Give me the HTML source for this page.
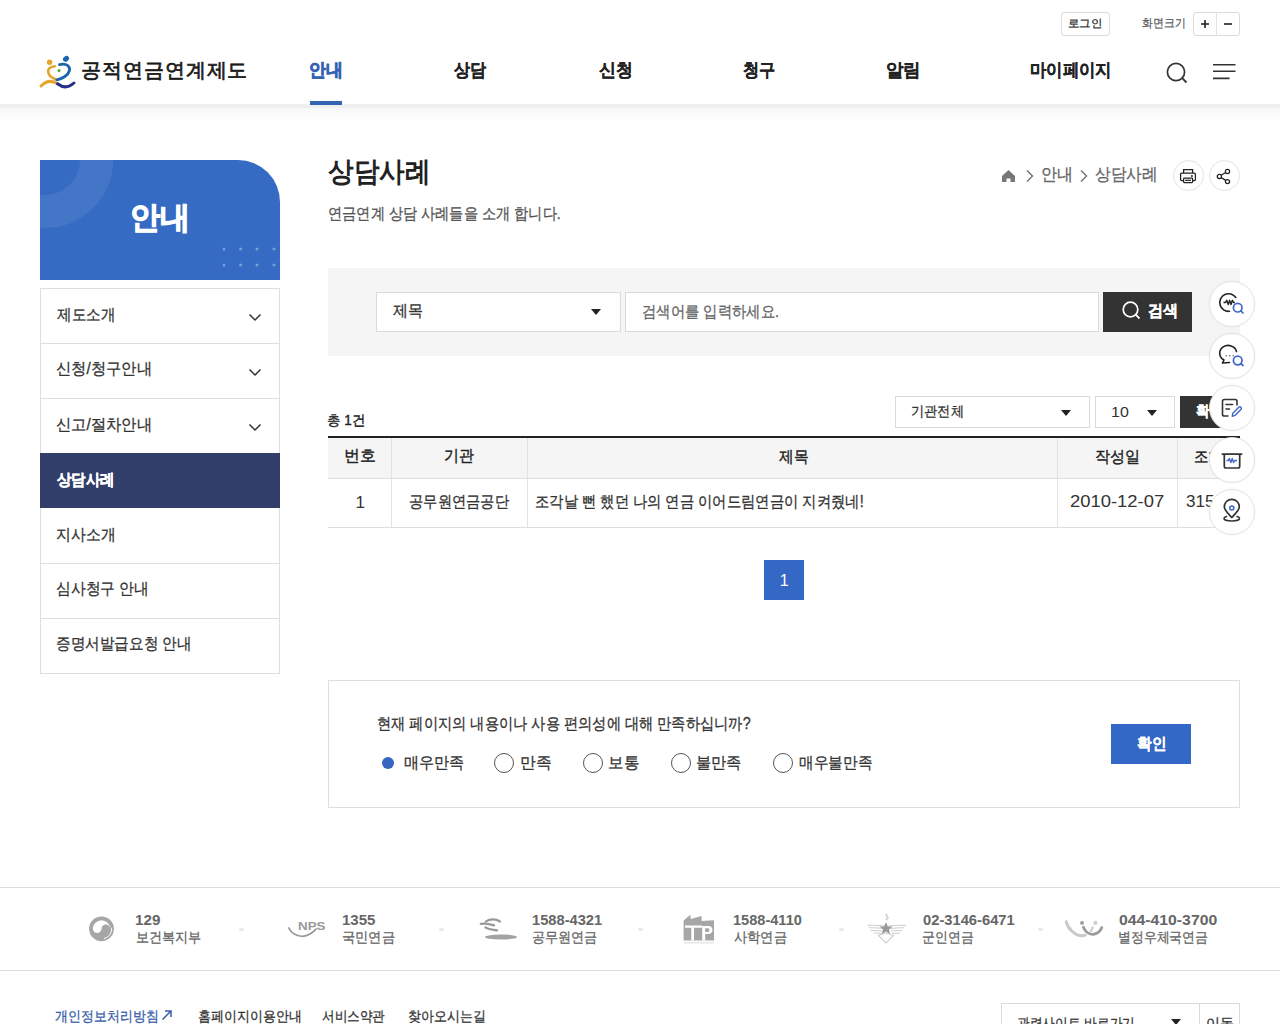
<!DOCTYPE html>
<html lang="ko">
<head>
<meta charset="utf-8">
<title>상담사례 - 공적연금연계제도</title>
<style>
*{box-sizing:border-box;margin:0;padding:0}
html,body{width:1280px;height:1024px;overflow:hidden;background:#fff}
body{position:relative;font-family:"Liberation Sans",sans-serif;color:#222}
.a{position:absolute}
.t{position:absolute;white-space:nowrap}
.bx{position:absolute;border:1px solid #ddd;background:#fff}
svg{position:absolute;overflow:visible}
</style>
</head>
<body>

<!-- ========== HEADER ========== -->
<div class="bx" style="left:1061px;top:12px;width:49px;height:24px;border-radius:3px;border-color:#dcdcdc"></div>
<div class="bx" style="left:1193px;top:12px;width:47px;height:24px;border-radius:3px;border-color:#dcdcdc"></div>
<div class="a" style="left:1216px;top:13px;width:1px;height:22px;background:#e5e5e5"></div>
<svg style="left:1200px;top:19px" width="10" height="10"><path d="M5 1V9M1 5H9" stroke="#222" stroke-width="1.6"/></svg>
<svg style="left:1223px;top:19px" width="10" height="10"><path d="M1 5H9" stroke="#222" stroke-width="1.6"/></svg>

<!-- logo -->
<svg style="left:36px;top:50px" width="50" height="45" viewBox="0 0 50 45">
  <circle cx="13.6" cy="12.3" r="2.7" fill="#e4a52a"/>
  <ellipse cx="30" cy="8.8" rx="3.2" ry="2.6" transform="rotate(-35 30 8.8)" fill="#1a64b0"/>
  <path d="M19 16.2 C14 16.5 11.5 19 12.3 22.5 C13 26 16 28 19.3 29" fill="none" stroke="#e4a52a" stroke-width="2.6" stroke-linecap="round"/>
  <path d="M23.5 14.6 C31 12.5 34.5 17 33.3 21 C32 25.5 26 29 20.8 29.8" fill="none" stroke="#1a64b0" stroke-width="2.8" stroke-linecap="round"/>
  <circle cx="23" cy="20.6" r="1.6" fill="#5fae3a"/>
  <path d="M5 36 C10 31 16 30 21.5 33.8" fill="none" stroke="#e4a52a" stroke-width="3" stroke-linecap="round"/>
  <path d="M21.5 33.8 C27 38 33 37.5 38 33" fill="none" stroke="#23308a" stroke-width="3" stroke-linecap="round"/>
</svg>

<!-- nav -->
<div class="a" style="left:310px;top:101px;width:32px;height:4px;background:#3563b4"></div>
<svg style="left:1165px;top:61px" width="26" height="26"><circle cx="11" cy="11" r="8.6" fill="none" stroke="#333" stroke-width="1.7"/><path d="M17.2 17.2L21.5 21.5" stroke="#333" stroke-width="1.8"/></svg>
<svg style="left:1212px;top:62px" width="26" height="20"><path d="M1 2.7H23.5M1 9.3H23.5M1 16.4H17.5" stroke="#333" stroke-width="1.6"/></svg>
<div class="a" style="left:0;top:104px;width:1280px;height:4px;background:#efefef"></div><div class="a" style="left:0;top:108px;width:1280px;height:14px;background:linear-gradient(#f7f7f7 0,#fafafa 30%,#fdfdfd 70%,#fff 100%)"></div>
<div class="a" style="left:310px;top:101px;width:32px;height:4px;background:#3563b4"></div>

<!-- ========== SIDEBAR ========== -->
<div class="a" style="left:40px;top:160px;width:240px;height:120px;background:#356bc3;border-top-right-radius:42px;overflow:hidden">
  <div class="a" style="left:-63px;top:-68px;width:136px;height:136px;border-radius:50%;border:33px solid rgba(255,255,255,0.08)"></div>
  <svg style="left:180px;top:85px" width="60" height="30">
    <g fill="rgba(255,255,255,0.35)"><circle cx="4" cy="4" r="1.5"/><circle cx="20.6" cy="4" r="1.5"/><circle cx="37" cy="4" r="1.5"/><circle cx="54" cy="4" r="1.5"/><circle cx="4" cy="20" r="1.5"/><circle cx="20.6" cy="20" r="1.5"/><circle cx="37" cy="20" r="1.5"/><circle cx="54" cy="20" r="1.5"/></g>
  </svg>
</div>

<div class="a" style="left:40px;top:288px;width:240px;height:386px;border:1px solid #dedede;background:#fff"></div>
<div class="a" style="left:40px;top:343px;width:240px;height:1px;background:#dedede"></div>
<div class="a" style="left:40px;top:398px;width:240px;height:1px;background:#dedede"></div>
<div class="a" style="left:40px;top:453px;width:240px;height:55px;background:#333f6b"></div>
<div class="a" style="left:40px;top:563px;width:240px;height:1px;background:#dedede"></div>
<div class="a" style="left:40px;top:618px;width:240px;height:1px;background:#dedede"></div>

<svg style="left:248px;top:313px" width="14" height="9"><path d="M1.5 1.5L7 7L12.5 1.5" fill="none" stroke="#333" stroke-width="1.5"/></svg>
<svg style="left:248px;top:368px" width="14" height="9"><path d="M1.5 1.5L7 7L12.5 1.5" fill="none" stroke="#333" stroke-width="1.5"/></svg>
<svg style="left:248px;top:423px" width="14" height="9"><path d="M1.5 1.5L7 7L12.5 1.5" fill="none" stroke="#333" stroke-width="1.5"/></svg>

<!-- ========== MAIN ========== -->

<!-- breadcrumb -->
<svg style="left:1001px;top:169px" width="16" height="14"><path d="M1 7L7.5 1L14 7V13H9.5V9.5H5.5V13H1Z" fill="#777"/></svg>
<svg style="left:1025px;top:169px" width="10" height="14"><path d="M2 1.5L7.5 7L2 12.5" fill="none" stroke="#777" stroke-width="1.5"/></svg>
<svg style="left:1079px;top:169px" width="10" height="14"><path d="M2 1.5L7.5 7L2 12.5" fill="none" stroke="#777" stroke-width="1.5"/></svg>
<div class="bx" style="left:1172.5px;top:160px;width:31px;height:31px;border-radius:50%;border-color:#e2e2e2"></div>
<div class="bx" style="left:1208.5px;top:160px;width:31px;height:31px;border-radius:50%;border-color:#e2e2e2"></div>
<svg style="left:1172px;top:160px" width="32" height="32" viewBox="0 0 32 32"><g fill="none" stroke="#222" stroke-width="1.25"><path d="M11.6 13V9.6H20.6V13"/><rect x="8.6" y="13.1" width="14.8" height="7.4" rx="1"/><rect x="11.6" y="18.2" width="9" height="4.3" rx="0.8" fill="#fff"/><path d="M13.2 20.3H19"/></g><circle cx="19.9" cy="16" r="0.95" fill="#222"/></svg>
<svg style="left:1208px;top:160px" width="32" height="32" viewBox="0 0 32 32"><g fill="none" stroke="#222" stroke-width="1.25"><circle cx="19.5" cy="11.4" r="2.1"/><circle cx="11.4" cy="16.4" r="2.1"/><circle cx="19.5" cy="21.6" r="2.1"/><path d="M13.2 15.2L17.7 12.5M13.2 17.6L17.7 20.4"/></g></svg>

<!-- search -->
<div class="a" style="left:328px;top:268px;width:912px;height:88px;background:#f5f5f5"></div>
<div class="bx" style="left:376px;top:292px;width:245px;height:40px;border-color:#dadada"></div>
<svg style="left:590px;top:308px" width="12" height="8"><path d="M1 1H11L6 7Z" fill="#222"/></svg>
<div class="bx" style="left:625px;top:292px;width:474px;height:40px;border-color:#dadada"></div>
<div class="a" style="left:1103px;top:292px;width:89px;height:40px;background:#333"></div>
<svg style="left:1121px;top:300px" width="22" height="22"><circle cx="9.5" cy="9.5" r="7.3" fill="none" stroke="#fff" stroke-width="1.7"/><path d="M14.7 14.7L18.5 18.5" stroke="#fff" stroke-width="1.8"/></svg>

<!-- list controls -->
<div class="bx" style="left:895px;top:396px;width:195px;height:32px;border-color:#dadada"></div>
<svg style="left:1060px;top:409px" width="12" height="8"><path d="M1 1H11L6 7Z" fill="#222"/></svg>
<div class="bx" style="left:1095px;top:396px;width:80px;height:32px;border-color:#dadada"></div>
<svg style="left:1146px;top:409px" width="12" height="8"><path d="M1 1H11L6 7Z" fill="#222"/></svg>
<div class="a" style="left:1180px;top:396px;width:60px;height:32px;background:#333"></div>

<!-- table -->
<div class="a" style="left:328px;top:436px;width:912px;height:2px;background:#222"></div>
<div class="a" style="left:328px;top:438px;width:912px;height:40px;background:#f5f5f5"></div>
<div class="a" style="left:328px;top:478px;width:912px;height:1px;background:#dedede"></div>
<div class="a" style="left:328px;top:527px;width:912px;height:1px;background:#dedede"></div>
<div class="a" style="left:391px;top:438px;width:1px;height:89px;background:#e2e2e2"></div>
<div class="a" style="left:527px;top:438px;width:1px;height:89px;background:#e2e2e2"></div>
<div class="a" style="left:1057px;top:438px;width:1px;height:89px;background:#e2e2e2"></div>
<div class="a" style="left:1177px;top:438px;width:1px;height:89px;background:#e2e2e2"></div>



<!-- pagination -->
<div class="a" style="left:764px;top:560px;width:40px;height:40px;background:#3468c4"></div>

<!-- survey -->
<div class="bx" style="left:328px;top:680px;width:912px;height:128px;border-color:#dedede"></div>
<div class="a" style="left:382px;top:757px;width:12px;height:12px;border-radius:50%;background:#3567c0"></div>
<div class="a" style="left:494px;top:753px;width:20px;height:20px;border-radius:50%;border:1px solid #555"></div>
<div class="a" style="left:583px;top:753px;width:20px;height:20px;border-radius:50%;border:1px solid #555"></div>
<div class="a" style="left:671px;top:753px;width:20px;height:20px;border-radius:50%;border:1px solid #555"></div>
<div class="a" style="left:773px;top:753px;width:20px;height:20px;border-radius:50%;border:1px solid #555"></div>
<div class="a" style="left:1111px;top:724px;width:80px;height:40px;background:#3468c6"></div>

<!-- floating quick menu -->
<div class="bx" style="left:1209px;top:281px;width:46px;height:46px;border-radius:50%;border-color:#e3e3e3;box-shadow:0 0 3px rgba(0,0,0,0.04);z-index:5"></div>
<div class="bx" style="left:1209px;top:333px;width:46px;height:46px;border-radius:50%;border-color:#e3e3e3;box-shadow:0 0 3px rgba(0,0,0,0.04);z-index:5"></div>
<div class="bx" style="left:1209px;top:385px;width:46px;height:46px;border-radius:50%;border-color:#e3e3e3;box-shadow:0 0 3px rgba(0,0,0,0.04);z-index:5"></div>
<div class="bx" style="left:1209px;top:437px;width:46px;height:46px;border-radius:50%;border-color:#e3e3e3;box-shadow:0 0 3px rgba(0,0,0,0.04);z-index:5"></div>
<div class="bx" style="left:1209px;top:489px;width:46px;height:46px;border-radius:50%;border-color:#e3e3e3;box-shadow:0 0 3px rgba(0,0,0,0.04);z-index:5"></div>

<svg style="left:1218px;top:290px;z-index:6" width="28" height="28" viewBox="0 0 28 28">
  <path d="M17.8 7.5 A8.8 8.8 0 1 0 11.5 21.3" fill="none" stroke="#222" stroke-width="1.6" stroke-linecap="round"/>
  <path d="M5.5 12.5H7.5L8.7 10.3L10.2 14.5L11.6 10.3L13 14.5L14.4 10.3L15.5 12.5H17" fill="none" stroke="#222" stroke-width="1.4" stroke-linejoin="round"/>
  <circle cx="19.7" cy="17.7" r="4.3" fill="none" stroke="#3f66c6" stroke-width="1.7"/>
  <path d="M22.8 20.8L25 23" stroke="#3f66c6" stroke-width="1.7" stroke-linecap="round"/>
</svg>
<svg style="left:1218px;top:342px;z-index:6" width="28" height="28" viewBox="0 0 28 28">
  <path d="M18.5 9.5 A8.5 7.8 0 1 0 6 18 L4.5 21 L11.5 20.5" fill="none" stroke="#222" stroke-width="1.6" stroke-linecap="round" stroke-linejoin="round"/>
  <path d="M7.5 13.8H9M11 13.8H12.5M14.5 13.8H16" stroke="#555" stroke-width="1"/>
  <circle cx="19.7" cy="18.5" r="4.3" fill="none" stroke="#3f66c6" stroke-width="1.7"/>
  <path d="M22.8 21.6L25 23.5" stroke="#3f66c6" stroke-width="1.7" stroke-linecap="round"/>
</svg>
<svg style="left:1218px;top:394px;z-index:6" width="28" height="28" viewBox="0 0 28 28">
  <path d="M10.5 22H6.3C5.2 22 4.5 21.3 4.5 20.2V7.3C4.5 6.2 5.2 5.5 6.3 5.5H17.2C18.3 5.5 19 6.2 19 7.3V11.5" fill="none" stroke="#333" stroke-width="1.6" stroke-linejoin="round"/>
  <path d="M8 10.5H14.5M8 15H11.5" stroke="#333" stroke-width="1.6" stroke-linecap="round"/>
  <path d="M14.2 22.3L14.8 19.3L20.8 13.3C21.4 12.7 22.3 12.7 22.9 13.3C23.5 13.9 23.5 14.8 22.9 15.4L16.9 21.4Z" fill="none" stroke="#3f66c6" stroke-width="1.4" stroke-linejoin="round"/>
</svg>
<svg style="left:1218px;top:446px;z-index:6" width="28" height="28" viewBox="0 0 28 28">
  <path d="M4.5 8.2H23.5" stroke="#333" stroke-width="1.8" stroke-linecap="round"/>
  <path d="M6.3 8.2V20.3C6.3 21.3 7 22 8 22H20C21 22 21.7 21.3 21.7 20.3V8.2" fill="none" stroke="#333" stroke-width="1.7" stroke-linejoin="round"/>
  <path d="M8.5 14.5H10.3L11.3 12.5L12.8 16.5L14.2 12.5L15.6 16.5L16.8 14.5H19" fill="none" stroke="#3f66c6" stroke-width="1.4" stroke-linejoin="round"/>
</svg>
<svg style="left:1218px;top:498px;z-index:6" width="28" height="28" viewBox="0 0 28 28">
  <path d="M13.8 19.5C9.5 15 6.3 12 6.3 8.8A7.5 7.5 0 0 1 21.3 8.8C21.3 12 18 15 13.8 19.5Z" fill="none" stroke="#333" stroke-width="1.7" stroke-linejoin="round"/>
  <circle cx="13.8" cy="10" r="2" fill="none" stroke="#3f66c6" stroke-width="1.6"/>
  <path d="M8.5 18.5C6.5 19 6 19.8 6 20.5C6 21.8 9.5 23 13.8 23C18.1 23 21.5 21.8 21.5 20.5C21.5 19.8 21 19 19 18.5" fill="none" stroke="#333" stroke-width="1.6" stroke-linecap="round"/>
</svg>

<!-- ========== FOOTER ========== -->
<div class="a" style="left:0;top:887px;width:1280px;height:1px;background:#dedede"></div>
<div class="a" style="left:0;top:970px;width:1280px;height:1px;background:#dedede"></div>

<!-- gov logo -->
<svg style="left:80px;top:905px" width="50" height="50" viewBox="0 0 50 50">
  <circle cx="21.5" cy="23.8" r="12.4" fill="#a6a6a6"/>
  <path d="M12.9 23.8 A8.6 8.6 0 0 1 30.1 23.8 A4.3 4.3 0 0 0 21.5 23.8 A4.3 4.3 0 0 1 12.9 23.8Z" fill="#fff"/>
  <path d="M31.6 22.5 A10.2 10.2 0 0 1 24 33.7" fill="none" stroke="#fff" stroke-width="0.9"/>
</svg>
<div class="a" style="left:239px;top:928px;width:5px;height:3px;border-radius:2px;background:#e9e9e9"></div>

<!-- NPS logo -->
<svg style="left:280px;top:905px" width="60" height="45" viewBox="0 0 60 45">
  <text x="18" y="24.6" font-family="Liberation Sans" font-size="11.5" font-weight="700" fill="#9a9a9a" textLength="27.5" lengthAdjust="spacingAndGlyphs">NPS</text>
  <path d="M8.8 23 C12 30 22 34 30 29 C33 27 35 25.5 36 24" fill="none" stroke="#999" stroke-width="1.8" stroke-linecap="round"/>
</svg>
<div class="a" style="left:439px;top:928px;width:5px;height:3px;border-radius:2px;background:#e9e9e9"></div>

<!-- GEPS logo -->
<svg style="left:470px;top:905px" width="60" height="45" viewBox="0 0 60 45">
  <path d="M15.7 16.6 C20 13.5 26 13.8 30 16.5" fill="none" stroke="#999" stroke-width="2.2" stroke-linecap="round"/>
  <path d="M10.8 18.8 C15 18.2 20 19 23.9 20.4" fill="none" stroke="#999" stroke-width="2.3" stroke-linecap="round"/>
  <path d="M15.5 22.5 C18.5 24 22 24.8 27 25.3" fill="none" stroke="#999" stroke-width="2.3" stroke-linecap="round"/>
  <ellipse cx="31" cy="32" rx="16" ry="2.6" fill="#a3a3a3"/>
</svg>
<div class="a" style="left:638px;top:928px;width:5px;height:3px;border-radius:2px;background:#e9e9e9"></div>

<!-- TP logo -->
<svg style="left:675px;top:905px" width="50" height="45" viewBox="0 0 50 45">
  <path d="M8.6 15.4 L15.4 9.7 L15.8 14 L26.6 11 L26.6 16 L39 15.2 L39 35.4 L8.6 35.4Z" fill="#a6a6a6"/>
  <path d="M10 20.6H27V22.8H19V35.4H16.3V22.8H10Z" fill="#fff"/>
  <path d="M27.2 21H33C36.5 21 37.5 23 37.5 25C37.5 27.2 36 29 33 29H30.2V35.4H27.2Z M30.2 23.2V26.9H32.6C34 26.9 34.5 26 34.5 25C34.5 24 34 23.2 32.6 23.2Z" fill="#fff" fill-rule="evenodd"/>
  <rect x="9" y="37" width="30" height="1.5" fill="#e6e6e6"/>
</svg>
<div class="a" style="left:839px;top:928px;width:5px;height:3px;border-radius:2px;background:#e9e9e9"></div>

<!-- military logo -->
<svg style="left:860px;top:905px" width="55" height="45" viewBox="0 0 55 45">
  <g stroke="#cfcfcf" stroke-width="1.1" fill="none">
    <path d="M7.5 20.4 C15 20 21 20.4 26 21 M28 21 C33 20.4 40 20 46 20.4"/>
    <path d="M9 22.8 C15 22.6 20 23 24 23.5 M30 23.5 C34 23 39 22.6 44 22.8"/>
    <path d="M10.5 25.5 C15 25.3 19 25.6 22.5 26 M31 26 C35 25.6 39 25.3 42 25.5"/>
    <path d="M14 28 C17 28 19.5 28.2 21.5 28.6 M32 28.6 C34 28.2 37 28 40 28"/>
    <path d="M26 28 L18.5 30.5 L26 38 L33.5 30.7 Z"/>
  </g>
  <path d="M26 9 L27.8 13 L26 15" fill="none" stroke="#d5d5d5" stroke-width="2"/>
  <path d="M26 17 L27.9 21.4 L32.6 21.6 L29 24.6 L30.2 29.2 L26 26.6 L21.8 29.2 L23 24.6 L19.4 21.6 L24.1 21.4Z" fill="#999"/>
</svg>
<div class="a" style="left:1038px;top:928px;width:5px;height:3px;border-radius:2px;background:#e9e9e9"></div>

<!-- post logo -->
<svg style="left:1055px;top:905px" width="60" height="45" viewBox="0 0 60 45">
  <path d="M11.3 16.8 C13 24 20 30.5 27 30.8 C28.5 30.8 29.5 30.6 30.3 30.2" fill="none" stroke="#c9c9c9" stroke-width="3" stroke-linecap="round"/>
  <path d="M28.4 22.3 C30 26.5 34 29.5 38 29.3 C42 29 45.5 26 46.8 22.6" fill="none" stroke="#9a9a9a" stroke-width="2.8" stroke-linecap="round"/>
  <circle cx="27" cy="17.9" r="1.9" fill="#999"/>
  <circle cx="40.4" cy="17.9" r="2.1" fill="#cfcfcf"/>
  <path d="M37.6 22.5 L36 26" stroke="#d0d0d0" stroke-width="2.4" stroke-linecap="round"/>
</svg>

<!-- bottom links -->
<svg style="left:161px;top:1009px" width="12" height="12"><path d="M1.5 10.5L10 2M4 2H10V8" fill="none" stroke="#3a5ea8" stroke-width="1.5"/></svg>

<div class="bx" style="left:1001px;top:1003px;width:199px;height:40px;border-color:#dadada"></div>
<svg style="left:1170px;top:1018px" width="12" height="8"><path d="M1 1H11L6 7Z" fill="#222"/></svg>
<div class="bx" style="left:1199px;top:1003px;width:41px;height:40px;border-color:#dadada"></div>

<div class="t" style="left:1068.06px;top:18.10px;font-size:11px;line-height:11px;font-weight:400;color:#222;transform:scaleX(1.0387);transform-origin:0 0;-webkit-text-stroke:0.25px currentColor;">로그인</div>
<div class="t" style="left:1142.30px;top:18.40px;font-size:11.5px;line-height:11.5px;font-weight:400;color:#555;transform:scaleX(0.9043);transform-origin:0 0;-webkit-text-stroke:0.2px currentColor;">화면크기</div>
<div class="t" style="left:80.60px;top:60.40px;font-size:20px;line-height:20px;font-weight:400;color:#1a1a1a;letter-spacing:0.986px;-webkit-text-stroke:0.7px currentColor;">공적연금연계제도</div>
<div class="t" style="left:309.06px;top:61.30px;font-size:18px;line-height:18px;font-weight:700;color:#3563b4;transform:scaleX(0.9412);transform-origin:0 0;-webkit-text-stroke:0.7px currentColor;">안내</div>
<div class="t" style="left:454.00px;top:60.80px;font-size:18px;line-height:18px;font-weight:700;color:#222;transform:scaleX(0.8919);transform-origin:0 0;-webkit-text-stroke:0.2px currentColor;">상담</div>
<div class="t" style="left:598.50px;top:61.30px;font-size:18px;line-height:18px;font-weight:700;color:#222;transform:scaleX(0.9412);transform-origin:0 0;-webkit-text-stroke:0.2px currentColor;">신청</div>
<div class="t" style="left:742.50px;top:61.30px;font-size:18px;line-height:18px;font-weight:700;color:#222;transform:scaleX(0.9028);transform-origin:0 0;-webkit-text-stroke:0.2px currentColor;">청구</div>
<div class="t" style="left:885.53px;top:60.80px;font-size:18px;line-height:18px;font-weight:700;color:#222;transform:scaleX(0.9697);transform-origin:0 0;-webkit-text-stroke:0.2px currentColor;">알림</div>
<div class="t" style="left:1029.99px;top:61.30px;font-size:18px;line-height:18px;font-weight:700;color:#222;transform:scaleX(0.9092);transform-origin:0 0;-webkit-text-stroke:0.2px currentColor;">마이페이지</div>
<div class="t" style="left:129.66px;top:202.00px;font-size:31px;line-height:31px;font-weight:700;color:#fff;transform:scaleX(0.9719);transform-origin:0 0;-webkit-text-stroke:1.1px currentColor;">안내</div>
<div class="t" style="left:57.40px;top:306.50px;font-size:16px;line-height:16px;font-weight:400;color:#333;transform:scaleX(0.9097);transform-origin:0 0;-webkit-text-stroke:0.3px currentColor;">제도소개</div>
<div class="t" style="left:56.24px;top:361.30px;font-size:16px;line-height:16px;font-weight:400;color:#333;transform:scaleX(0.9567);transform-origin:0 0;-webkit-text-stroke:0.3px currentColor;">신청/청구안내</div>
<div class="t" style="left:56.24px;top:417.00px;font-size:16px;line-height:16px;font-weight:400;color:#333;transform:scaleX(0.9567);transform-origin:0 0;-webkit-text-stroke:0.3px currentColor;">신고/절차안내</div>
<div class="t" style="left:57.20px;top:472.30px;font-size:16px;line-height:16px;font-weight:700;color:#fff;transform:scaleX(0.9016);transform-origin:0 0;-webkit-text-stroke:0.4px currentColor;">상담사례</div>
<div class="t" style="left:56.27px;top:527.00px;font-size:16px;line-height:16px;font-weight:400;color:#333;transform:scaleX(0.9311);transform-origin:0 0;-webkit-text-stroke:0.3px currentColor;">지사소개</div>
<div class="t" style="left:56.27px;top:581.00px;font-size:16px;line-height:16px;font-weight:400;color:#333;transform:scaleX(0.9258);transform-origin:0 0;-webkit-text-stroke:0.3px currentColor;">심사청구 안내</div>
<div class="t" style="left:56.29px;top:636.00px;font-size:16px;line-height:16px;font-weight:400;color:#333;transform:scaleX(0.9117);transform-origin:0 0;-webkit-text-stroke:0.3px currentColor;">증명서발급요청 안내</div>
<div class="t" style="left:328.00px;top:158.10px;font-size:28px;line-height:28px;font-weight:700;color:#222;transform:scaleX(0.9138);transform-origin:0 0;">상담사례</div>
<div class="t" style="left:328.11px;top:206.00px;font-size:16px;line-height:16px;font-weight:400;color:#555;transform:scaleX(0.8873);transform-origin:0 0;-webkit-text-stroke:0.3px currentColor;">연금연계 상담 사례들을 소개 합니다.</div>
<div class="t" style="left:1040.86px;top:166.20px;font-size:17px;line-height:17px;font-weight:400;color:#666;transform:scaleX(0.9419);transform-origin:0 0;-webkit-text-stroke:0.3px currentColor;">안내</div>
<div class="t" style="left:1094.68px;top:166.20px;font-size:17px;line-height:17px;font-weight:400;color:#666;transform:scaleX(0.9215);transform-origin:0 0;-webkit-text-stroke:0.3px currentColor;">상담사례</div>
<div class="t" style="left:393.00px;top:303.30px;font-size:16px;line-height:16px;font-weight:400;color:#333;transform:scaleX(0.9355);transform-origin:0 0;-webkit-text-stroke:0.3px currentColor;">제목</div>
<div class="t" style="left:641.70px;top:303.50px;font-size:16px;line-height:16px;font-weight:400;color:#666;transform:scaleX(0.8967);transform-origin:0 0;-webkit-text-stroke:0.3px currentColor;">검색어를 입력하세요.</div>
<div class="t" style="left:1147.50px;top:302.70px;font-size:16px;line-height:16px;font-weight:700;color:#fff;transform:scaleX(0.9419);transform-origin:0 0;-webkit-text-stroke:0.3px currentColor;">검색</div>
<div class="t" style="left:327.04px;top:412.50px;font-size:14px;line-height:14px;font-weight:400;color:#222;transform:scaleX(0.9605);transform-origin:0 0;-webkit-text-stroke:0.4px currentColor;">총 1건</div>
<div class="t" style="left:911.06px;top:404.20px;font-size:14px;line-height:14px;font-weight:400;color:#333;transform:scaleX(0.9434);transform-origin:0 0;-webkit-text-stroke:0.3px currentColor;">기관전체</div>
<div class="t" style="left:1110.93px;top:403.70px;font-size:15px;line-height:15px;font-weight:400;color:#333;transform:scaleX(1.0667);transform-origin:0 0;">10</div>
<div class="t" style="left:1195.70px;top:403.00px;font-size:15px;line-height:15px;font-weight:700;color:#fff;transform:scaleX(0.9000);transform-origin:0 0;-webkit-text-stroke:0.3px currentColor;">확인</div>
<div class="t" style="left:344.01px;top:448.00px;font-size:16px;line-height:16px;font-weight:400;color:#222;transform:scaleX(0.9933);transform-origin:0 0;-webkit-text-stroke:0.4px currentColor;">번호</div>
<div class="t" style="left:444.06px;top:448.00px;font-size:16px;line-height:16px;font-weight:400;color:#222;transform:scaleX(0.9355);transform-origin:0 0;-webkit-text-stroke:0.4px currentColor;">기관</div>
<div class="t" style="left:778.50px;top:448.50px;font-size:16px;line-height:16px;font-weight:400;color:#222;transform:scaleX(0.9194);transform-origin:0 0;-webkit-text-stroke:0.4px currentColor;">제목</div>
<div class="t" style="left:1094.76px;top:448.80px;font-size:16px;line-height:16px;font-weight:400;color:#222;transform:scaleX(0.9413);transform-origin:0 0;-webkit-text-stroke:0.4px currentColor;">작성일</div>
<div class="t" style="left:1193.80px;top:448.80px;font-size:16px;line-height:16px;font-weight:400;color:#222;transform:scaleX(0.9000);transform-origin:0 0;-webkit-text-stroke:0.4px currentColor;">조회</div>
<div class="t" style="left:355.60px;top:493.50px;font-size:17px;line-height:17px;font-weight:400;color:#333;">1</div>
<div class="t" style="left:408.71px;top:493.50px;font-size:16px;line-height:16px;font-weight:400;color:#333;transform:scaleX(0.8910);transform-origin:0 0;-webkit-text-stroke:0.3px currentColor;">공무원연금공단</div>
<div class="t" style="left:535.10px;top:493.50px;font-size:16px;line-height:16px;font-weight:400;color:#333;transform:scaleX(0.8951);transform-origin:0 0;-webkit-text-stroke:0.3px currentColor;">조각날 뻔 했던 나의 연금 이어드림연금이 지켜줬네!</div>
<div class="t" style="left:1069.62px;top:493.30px;font-size:17px;line-height:17px;font-weight:400;color:#333;transform:scaleX(1.0837);transform-origin:0 0;">2010-12-07</div>
<div class="t" style="left:1186.00px;top:493.30px;font-size:17px;line-height:17px;font-weight:400;color:#333;transform:scaleX(1.0000);transform-origin:0 0;">3156</div>
<div class="t" style="left:779.70px;top:573.10px;font-size:16px;line-height:16px;font-weight:400;color:#fff;">1</div>
<div class="t" style="left:376.61px;top:716.20px;font-size:16px;line-height:16px;font-weight:400;color:#333;transform:scaleX(0.8904);transform-origin:0 0;-webkit-text-stroke:0.3px currentColor;">현재 페이지의 내용이나 사용 편의성에 대해 만족하십니까?</div>
<div class="t" style="left:403.56px;top:755.30px;font-size:16px;line-height:16px;font-weight:400;color:#333;transform:scaleX(0.9435);transform-origin:0 0;-webkit-text-stroke:0.3px currentColor;">매우만족</div>
<div class="t" style="left:520.02px;top:755.30px;font-size:16px;line-height:16px;font-weight:400;color:#333;transform:scaleX(0.9833);transform-origin:0 0;-webkit-text-stroke:0.3px currentColor;">만족</div>
<div class="t" style="left:608.43px;top:755.30px;font-size:16px;line-height:16px;font-weight:400;color:#333;transform:scaleX(0.9700);transform-origin:0 0;-webkit-text-stroke:0.3px currentColor;">보통</div>
<div class="t" style="left:696.35px;top:755.30px;font-size:16px;line-height:16px;font-weight:400;color:#333;transform:scaleX(0.9500);transform-origin:0 0;-webkit-text-stroke:0.3px currentColor;">불만족</div>
<div class="t" style="left:799.49px;top:755.30px;font-size:16px;line-height:16px;font-weight:400;color:#333;transform:scaleX(0.9141);transform-origin:0 0;-webkit-text-stroke:0.3px currentColor;">매우불만족</div>
<div class="t" style="left:1136.70px;top:735.70px;font-size:16px;line-height:16px;font-weight:700;color:#fff;transform:scaleX(0.9129);transform-origin:0 0;-webkit-text-stroke:0.2px currentColor;">확인</div>
<div class="t" style="left:135.41px;top:913.20px;font-size:14px;line-height:14px;font-weight:700;color:#666;transform:scaleX(1.0864);transform-origin:0 0;">129</div>
<div class="t" style="left:135.57px;top:929.90px;font-size:14px;line-height:14px;font-weight:400;color:#666;transform:scaleX(0.9338);transform-origin:0 0;-webkit-text-stroke:0.3px currentColor;">보건복지부</div>
<div class="t" style="left:341.73px;top:913.20px;font-size:14px;line-height:14px;font-weight:700;color:#666;transform:scaleX(1.0733);transform-origin:0 0;">1355</div>
<div class="t" style="left:341.86px;top:929.90px;font-size:14px;line-height:14px;font-weight:400;color:#666;transform:scaleX(0.9444);transform-origin:0 0;-webkit-text-stroke:0.3px currentColor;">국민연금</div>
<div class="t" style="left:532.35px;top:913.20px;font-size:14px;line-height:14px;font-weight:700;color:#666;transform:scaleX(1.0485);transform-origin:0 0;">1588-4321</div>
<div class="t" style="left:532.46px;top:929.90px;font-size:14px;line-height:14px;font-weight:400;color:#666;transform:scaleX(0.9353);transform-origin:0 0;-webkit-text-stroke:0.3px currentColor;">공무원연금</div>
<div class="t" style="left:732.96px;top:913.20px;font-size:14px;line-height:14px;font-weight:700;color:#666;transform:scaleX(1.0400);transform-origin:0 0;">1588-4110</div>
<div class="t" style="left:734.00px;top:929.90px;font-size:14px;line-height:14px;font-weight:400;color:#666;transform:scaleX(0.9455);transform-origin:0 0;-webkit-text-stroke:0.3px currentColor;">사학연금</div>
<div class="t" style="left:922.50px;top:913.20px;font-size:14px;line-height:14px;font-weight:700;color:#666;transform:scaleX(1.0517);transform-origin:0 0;">02-3146-6471</div>
<div class="t" style="left:921.58px;top:929.90px;font-size:14px;line-height:14px;font-weight:400;color:#666;transform:scaleX(0.9167);transform-origin:0 0;-webkit-text-stroke:0.3px currentColor;">군인연금</div>
<div class="t" style="left:1119.00px;top:913.20px;font-size:14px;line-height:14px;font-weight:700;color:#666;transform:scaleX(1.1264);transform-origin:0 0;">044-410-3700</div>
<div class="t" style="left:1118.08px;top:929.90px;font-size:14px;line-height:14px;font-weight:400;color:#666;transform:scaleX(0.9167);transform-origin:0 0;-webkit-text-stroke:0.3px currentColor;">별정우체국연금</div>
<div class="t" style="left:54.83px;top:1008.50px;font-size:14px;line-height:14px;font-weight:400;color:#3a5ea8;transform:scaleX(0.9243);transform-origin:0 0;-webkit-text-stroke:0.3px currentColor;">개인정보처리방침</div>
<div class="t" style="left:198.08px;top:1008.50px;font-size:14px;line-height:14px;font-weight:400;color:#333;transform:scaleX(0.9239);transform-origin:0 0;-webkit-text-stroke:0.3px currentColor;">홈페이지이용안내</div>
<div class="t" style="left:322.10px;top:1008.50px;font-size:14px;line-height:14px;font-weight:400;color:#333;transform:scaleX(0.8986);transform-origin:0 0;-webkit-text-stroke:0.3px currentColor;">서비스약관</div>
<div class="t" style="left:408.07px;top:1008.50px;font-size:14px;line-height:14px;font-weight:400;color:#333;transform:scaleX(0.9259);transform-origin:0 0;-webkit-text-stroke:0.3px currentColor;">찾아오시는길</div>
<div class="t" style="left:1016.59px;top:1015.50px;font-size:14px;line-height:14px;font-weight:400;color:#333;transform:scaleX(0.9094);transform-origin:0 0;-webkit-text-stroke:0.3px currentColor;">관련사이트 바로가기</div>
<div class="t" style="left:1206.00px;top:1015.50px;font-size:14px;line-height:14px;font-weight:400;color:#333;transform:scaleX(1.0000);transform-origin:0 0;-webkit-text-stroke:0.3px currentColor;">이동</div>
</body>
</html>
